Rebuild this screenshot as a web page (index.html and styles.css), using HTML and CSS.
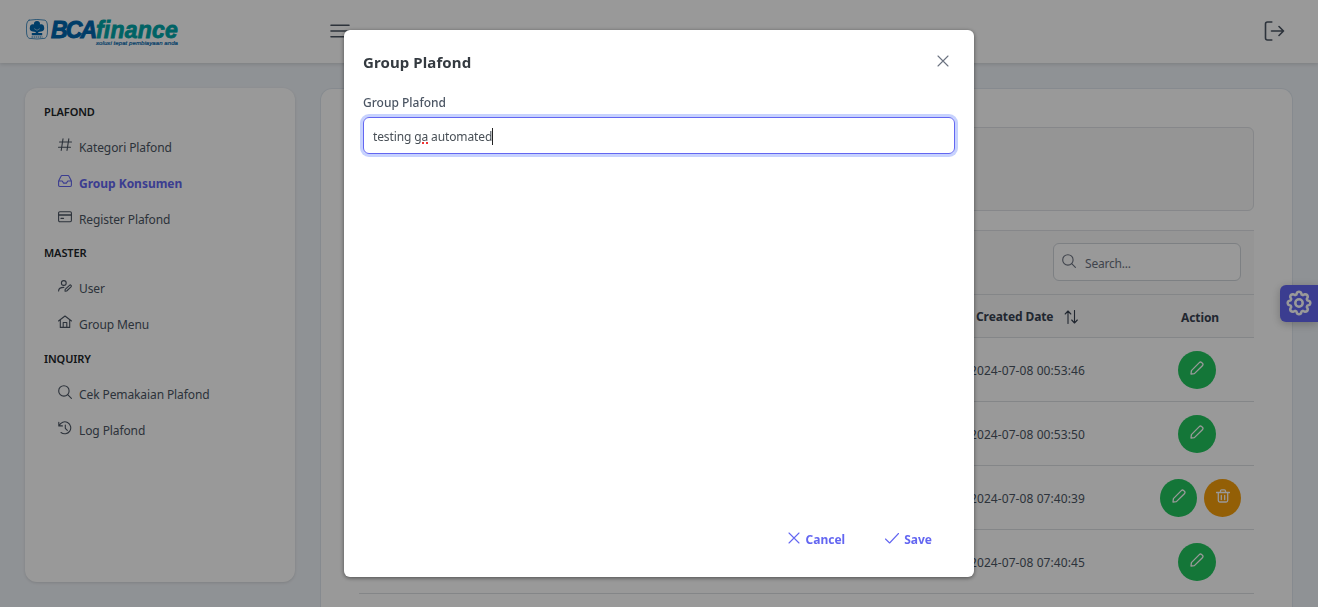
FILE: index.html
```
<!DOCTYPE html>
<html lang="id">
<head>
<meta charset="utf-8">
<title>Group Plafond</title>
<link rel="stylesheet" href="styles.css">
</head>
<body>
<svg class="defs" aria-hidden="true">
  <symbol id="pencil" viewBox="0 0 14 14"><path d="M1 13l.4-3.400 7.900-8a1.700 1.700 0 0 1 2.400 0l.7.7a1.700 1.700 0 0 1 0 2.400l-8 7.900z"/></symbol>
  <symbol id="search" viewBox="0 0 14 14"><circle cx="5.900" cy="5.900" r="5.200"/><path d="M9.700 9.700l3.700 3.700"/></symbol>
  <symbol id="times" viewBox="0 0 14 14"><path d="M2 2l10 10M12 2L2 12"/></symbol>
</svg>
<header class="topbar">
  <div class="logo">
    <svg class="emblem" viewBox="0 0 22 21"><path d="M3 1.200Q11-.4 19 1.200 21 2 21.300 5q.6 5 0 10-.4 3.500-2.300 4.300-8 1.400-16 0Q1.100 18.500.7 15q-.600-5 0-10Q1 2 3 1.200z" fill="none" stroke="#0066ae" stroke-width=".7"/><path d="M11 2c2.200 0 3.500 1.700 2.900 3.500 2-1 4.100.2 4.100 2.300.8 2.400-.4 4.600-2.700 4.600L12.300 13v1h3.900v2.300H5.800V14h3.900v-1l-3-.6c-2.300 0-3.500-2.200-2.700-4.600 0-2.100 2.100-3.300 4.100-2.300C7.500 3.700 8.800 2 11 2z" fill="#0066ae" stroke="none"/><path d="M8.500 9.800l2.500 1.500 2.500-1.500" stroke="#fff" stroke-width=".5" fill="none"/><path d="M5.500 18h11" stroke="#0066ae" stroke-width=".9" stroke-linecap="butt" stroke-dasharray="1.500 .6"/></svg>
    <div class="wordmark">
      <div class="brand"><span class="bca">BCA</span><span class="fin">finance</span></div>
      <div class="tagline">solusi tepat pembiayaan anda</div>
    </div>
  </div>
  <svg class="burger" viewBox="0 0 20 14"><path d="M1 1.200h18M1 7h18M1 12.800h18"/></svg>
  <svg class="logout" viewBox="0 0 20 20"><path d="M7.300 1H3Q1 1 1 3v14q0 2 2 2h4.300M7 10h12M14.500 5.500L19 10l-4.500 4.500"/></svg>
</header>
<div class="layout">
  <nav class="sidebar">
    <h2 class="group">PLAFOND</h2>
    <a class="item"><svg viewBox="0 0 14 14"><path d="M5 .8L3.200 12.500M10.800.8L9 12.500M1.500 4h12M.5 9.300h12"/></svg><span>Kategori Plafond</span></a>
    <a class="item active"><svg viewBox="0 0 14 14"><path d="M.6 7L3 2.200Q3.300 1.500 4 1.500h6q.7 0 1 .7L13.400 7v4.300q0 1.200-1.200 1.200H1.800Q.6 12.500.6 11.300zM.6 7h3.600l1.400 2.100h2.800L9.800 7h3.600"/></svg><span>Group Konsumen</span></a>
    <a class="item"><svg viewBox="0 0 14 14"><rect x=".6" y="1.800" width="12.800" height="10" rx="1.200"/><path d="M.6 5h12.800M3 8.300h2.500" stroke-width="1.300"/></svg><span>Register Plafond</span></a>
    <h2 class="group short">MASTER</h2>
    <a class="item"><svg viewBox="0 0 14 14"><circle cx="5.800" cy="4" r="2.400"/><path d="M.6 12c0-2.400 1.500-3.600 5.200-3.600M7 12.200l.2-1.800 4.300-4.100q.8-.7 1.500 0t0 1.500L8.700 12z"/></svg><span>User</span></a>
    <a class="item"><svg viewBox="0 0 14 14"><path d="M.5 6L7 1l6.500 5M2.300 5v7.400h9.400V5M5.200 12.400V7.500h3.600v4.900"/></svg><span>Group Menu</span></a>
    <h2 class="group">INQUIRY</h2>
    <a class="item"><svg><use href="#search"/></svg><span>Cek Pemakaian Plafond</span></a>
    <a class="item"><svg viewBox="0 0 14 14"><path d="M.8 1.300v3.600h3.600M1.200 4.500A6 6 0 1 1 3 11.500M7.300 4v3.300l2 2"/></svg><span>Log Plafond</span></a>
  </nav>
  <main class="card">
    <div class="toolbar"></div>
    <section class="table">
      <div class="caption"><div class="search"><svg><use href="#search"/></svg><span>Search...</span></div></div>
      <div class="row head"><div class="date"><span>Created Date</span><svg viewBox="0 0 14 14"><path d="M4 13.500V1M1.200 4L4 1l2.800 3M10.500.5V13M7.700 10l2.800 3 2.800-3"/></svg></div><div class="action">Action</div></div>
      <div class="row"><div class="date">2024-07-08 00:53:46</div><div class="action"><button class="round"><svg><use href="#pencil"/></svg></button></div></div>
      <div class="row"><div class="date">2024-07-08 00:53:50</div><div class="action"><button class="round"><svg><use href="#pencil"/></svg></button></div></div>
      <div class="row"><div class="date">2024-07-08 07:40:39</div><div class="action pair"><button class="round"><svg><use href="#pencil"/></svg></button><button class="round warn"><svg viewBox="0 0 14 14"><path d="M.5 3.500h13M4.500 3.500V2q0-1.200 1.200-1.200h2.600q1.200 0 1.200 1.200v1.500M2.300 3.500v8q0 1.500 1.500 1.500h6.400q1.500 0 1.500-1.500v-8M5.300 6.500v4M8.700 6.500v4"/></svg></button></div></div>
      <div class="row"><div class="date">2024-07-08 07:40:45</div><div class="action"><button class="round"><svg><use href="#pencil"/></svg></button></div></div>
    </section>
  </main>
</div>
<button class="config"><svg viewBox="0 0 26 26"><path d="M11.100 2.500q1.900-1.600 3.800 0l.8 2.200 1.200.5 2.200-1q2.600.1 2.700 2.700l-1 2.200.5 1.200 2.200.8q1.600 1.900 0 3.800l-2.200.8-.5 1.200 1 2.200q-.1 2.600-2.700 2.700l-2.200-1-1.200.5-.8 2.200q-1.900 1.600-3.800 0l-.8-2.200-1.200-.5-2.200 1q-2.600-.1-2.700-2.700l1-2.200-.5-1.200-2.200-.8q-1.600-1.900 0-3.800l2.200-.8.5-1.200-1-2.200q.1-2.600 2.700-2.700l2.200 1 1.200-.5z"/><circle cx="13" cy="13" r="3.700"/></svg></button>
<div class="mask">
  <section class="dialog">
    <div class="dialog-head"><h1>Group Plafond</h1><svg><use href="#times"/></svg></div>
    <div class="dialog-body">
      <div class="label"><span>Group Plafond</span></div>
      <div class="field"><span class="value">testing <span class="typo">ga</span> automated</span><i class="caret"></i></div>
    </div>
    <div class="dialog-foot">
      <button class="text-btn"><svg><use href="#times"/></svg><span>Cancel</span></button>
      <button class="text-btn"><svg viewBox="0 0 14 14"><path d="M.5 8L4.600 12 13.500 2.500"/></svg><span>Save</span></button>
    </div>
  </section>
</div>
</body>
</html>
```
FILE: styles.css
```
* { box-sizing: border-box; }
body { margin: 0; height: 607px; overflow: hidden; background: #eff3f8; color: #4b5563; font: 12px/18px "Noto Sans", "Open Sans", sans-serif; }
svg { width: 14px; height: 14px; flex: none; fill: none; stroke: currentColor; stroke-width: 1.1; stroke-linecap: round; stroke-linejoin: round; }
.defs { position: absolute; width: 0; height: 0; }
h1, h2 { margin: 0; }
button { border: 0; padding: 0; font: inherit; display: flex; align-items: center; justify-content: center; }
span { white-space: nowrap; }

.topbar { height: 63px; padding: 0 33px 0 26px; display: flex; align-items: center; background: #fff; box-shadow: 0 1px 4px rgba(0,0,0,.15); }
.logo { width: 304px; height: 26px; display: flex; gap: 3px; }
.emblem { width: 22px; height: 21px; }
.wordmark { width: 130px; font-family: "Liberation Sans", Arial, sans-serif; }
.brand { display: flex; height: 20px; padding-top: 1px; font-size: 23px; line-height: 20px; font-weight: bold; font-style: italic; }
.bca { color: #0066ae; width: 45px; letter-spacing: -1.8px; -webkit-text-stroke: 1px #0066ae; }
.fin { color: #00a5a8; letter-spacing: .2px; -webkit-text-stroke: .8px #00a5a8; }
.tagline { margin-top: 1px; padding-left: 45px; color: #0066ae; font-size: 6px; line-height: 6px; letter-spacing: .08px; font-style: italic; white-space: nowrap; -webkit-text-stroke: .2px #0066ae; }
.burger { width: 20px; stroke-width: 1.6; margin-top: -2px; }
.logout { width: 21px; height: 20px; margin-left: auto; margin-top: -2px; stroke-width: 1.6; }

.layout { height: 544px; display: flex; align-items: flex-start; gap: 25px; padding: 25px 25px 0 25px; }
.sidebar { width: 270px; height: 494px; padding: 7px 19px; border-radius: 12px; background: #fff; box-shadow: 0 1px 3px rgba(0,0,0,.12); }
.group { height: 34px; line-height: 34px; font-size: 11px; font-weight: 600; letter-spacing: -.1px; color: #212529; }
.group.short { height: 33px; line-height: 32px; }
.item { height: 36px; padding-left: 14px; display: flex; align-items: center; gap: 7px; letter-spacing: -.1px; }
.item svg { margin-top: -4px; }
.item span { padding-top: 2px; }
.active { color: #6366f1; font-weight: 700; letter-spacing: -.02px; }

.card { flex: 1; height: 519px; padding: 38px 38px 0; border: 1px solid #dfe7ef; border-bottom: 0; border-radius: 12px 12px 0 0; background: #fff; }
.toolbar { height: 84px; margin-bottom: 19px; border: 1px solid #dfe2e6; border-radius: 6px; background: #f8f8f8; }
.caption { height: 64px; padding: 12px 13px; display: flex; justify-content: flex-end; border-top: 1px solid #e0e2e6; background: #f8f8f8; }
.search { width: 188px; height: 38px; padding: 0 8px; display: flex; align-items: center; gap: 9px; border: 1px solid #d1d5db; border-radius: 6px; background: #fff; color: #6b7280; letter-spacing: -.2px; }
.search svg { margin-top: -3px; }
.search span { margin-top: 3px; }
.row { height: 64px; display: flex; justify-content: flex-end; align-items: center; border-bottom: 1px solid #dcdfe3; padding-top: 2px; }
.head { height: 44px; border-top: 1px solid #dcdfe3; background: #f8f8f8; color: #374151; font-weight: 700; letter-spacing: -.1px; }
.date { width: 169px; white-space: nowrap; display: flex; align-items: center; letter-spacing: .08px; }
.head .date { width: 163px; gap: 11px; letter-spacing: -.1px; }
.action { width: 115px; display: flex; justify-content: center; gap: 7px; }
.head .action { padding: 2px 0 0 7px; }
.row:not(.head) .action { margin-top: -1px; }
.pair { padding-left: 8px; }
.round { width: 38px; height: 38px; border-radius: 50%; background: #22c55e; color: #fff; }
.round svg { margin-top: -4px; margin-left: 1px; stroke-width: 1.3; }
.round:not(:only-child) { width: 37px; }
.round.warn { background: #f59e0b; }
.round.warn svg { margin-left: 0; }

.config { position: fixed; right: 0; top: 285px; width: 38px; height: 37px; border-radius: 6px 0 0 6px; background: #6366f1; color: #fff; box-shadow: 0 2px 10px rgba(0,0,0,.25); }
.config svg { width: 26px; height: 26px; margin-top: -1px; stroke-width: 2.5; }

.mask { position: fixed; inset: 0; display: flex; align-items: center; justify-content: center; background: rgba(0,0,0,.4); }
.dialog { width: 630px; height: 547px; padding: 0 19px; display: flex; flex-direction: column; border-radius: 6px; background: #fff; box-shadow: 0 1px 4px rgba(0,0,0,.5); }
.dialog-head { height: 64px; padding-right: 5px; display: flex; align-items: center; justify-content: space-between; color: #6b7280; }
.dialog-head h1 { font-size: 15px; line-height: 20px; font-weight: 700; letter-spacing: .1px; color: #343a40; }
.dialog-head svg { margin-top: -2px; }
.dialog-body { flex: 1; }
.label { height: 23px; line-height: 17px; font-weight: 500; }
.field { height: 37px; padding: 2px 9px 0; display: flex; align-items: center; border: 1px solid #6366f1; border-radius: 6px; box-shadow: 0 0 0 3px #c7d2fe; color: #495057; letter-spacing: -.12px; }
.typo { text-decoration: underline dotted #e33 1.5px; text-underline-offset: 2px; }
.caret { width: 1px; height: 17px; margin-top: -1px; background: #222; }
.dialog-foot { height: 76px; padding: 0 23px 0 0; display: flex; align-items: center; justify-content: flex-end; gap: 40px; }
.text-btn { gap: 5px; background: none; color: #6366f1; font-weight: 700; }
.text-btn span { padding-top: 2px; }
.text-btn svg { margin-top: -2px; }
```
